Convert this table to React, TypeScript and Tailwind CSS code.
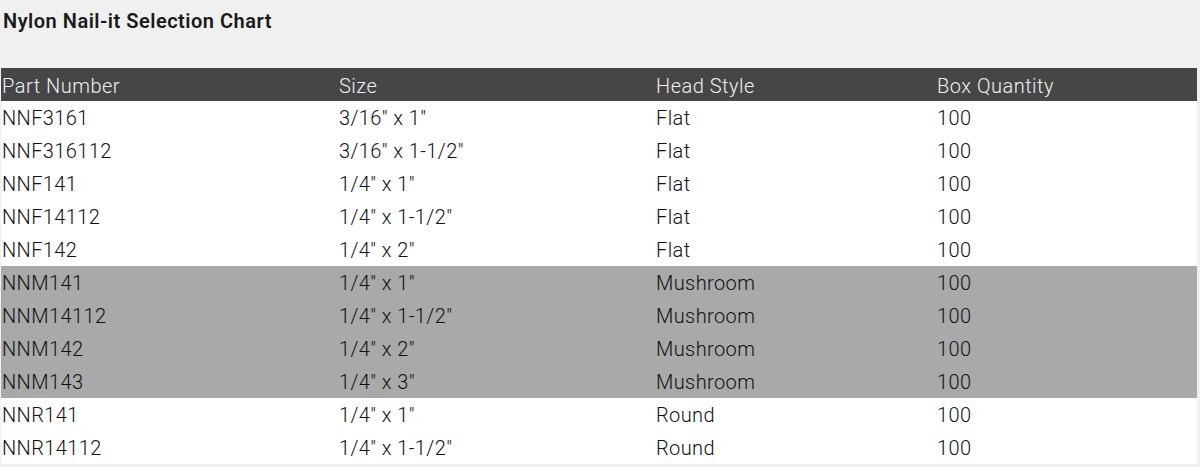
import React from "react";

const rows = [
  { part: "NNF3161", size: '3/16" x 1"', head: "Flat", qty: "100", shaded: false },
  { part: "NNF316112", size: '3/16" x 1-1/2"', head: "Flat", qty: "100", shaded: false },
  { part: "NNF141", size: '1/4" x 1"', head: "Flat", qty: "100", shaded: false },
  { part: "NNF14112", size: '1/4" x 1-1/2"', head: "Flat", qty: "100", shaded: false },
  { part: "NNF142", size: '1/4" x 2"', head: "Flat", qty: "100", shaded: false },
  { part: "NNM141", size: '1/4" x 1"', head: "Mushroom", qty: "100", shaded: true },
  { part: "NNM14112", size: '1/4" x 1-1/2"', head: "Mushroom", qty: "100", shaded: true },
  { part: "NNM142", size: '1/4" x 2"', head: "Mushroom", qty: "100", shaded: true },
  { part: "NNM143", size: '1/4" x 3"', head: "Mushroom", qty: "100", shaded: true },
  { part: "NNR141", size: '1/4" x 1"', head: "Round", qty: "100", shaded: false },
  { part: "NNR14112", size: '1/4" x 1-1/2"', head: "Round", qty: "100", shaded: false },
];

const cols = "grid grid-cols-[337px_317px_281px_1fr]";

export default function App() {
  return (
    <div className="min-h-[467px] bg-[#f0f0f0] font-['Roboto',sans-serif]">
      {/* Title */}
      <div className="h-[68px] px-[3px] pt-[8px]">
        <h2 className="text-[20px] font-semibold text-[#1a1a1a] leading-[26px] tracking-[0.5px]">Nylon Nail-it Selection Chart</h2>
      </div>

      {/* Table */}
      <div className="pl-[1px] pr-[3px]">
        <div className={`${cols} h-[33px] items-center bg-[#464646] text-[#f0f0f0] text-[20px] font-light tracking-[0.5px] pl-[1px] pt-[2px]`}>
          <span>Part Number</span>
          <span>Size</span>
          <span>Head Style</span>
          <span>Box Quantity</span>
        </div>
        {rows.map((r) => (
          <div
            key={r.part}
            className={`${cols} h-[33px] items-center text-[20px] font-light tracking-[0.4px] text-[#111] pl-[1px] pt-[1px] ${r.shaded ? "bg-[#a9a9a9]" : "bg-white"}`}
          >
            <span>{r.part}</span>
            <span>{r.size}</span>
            <span>{r.head}</span>
            <span>{r.qty}</span>
          </div>
        ))}
      </div>
    </div>
  );
}
